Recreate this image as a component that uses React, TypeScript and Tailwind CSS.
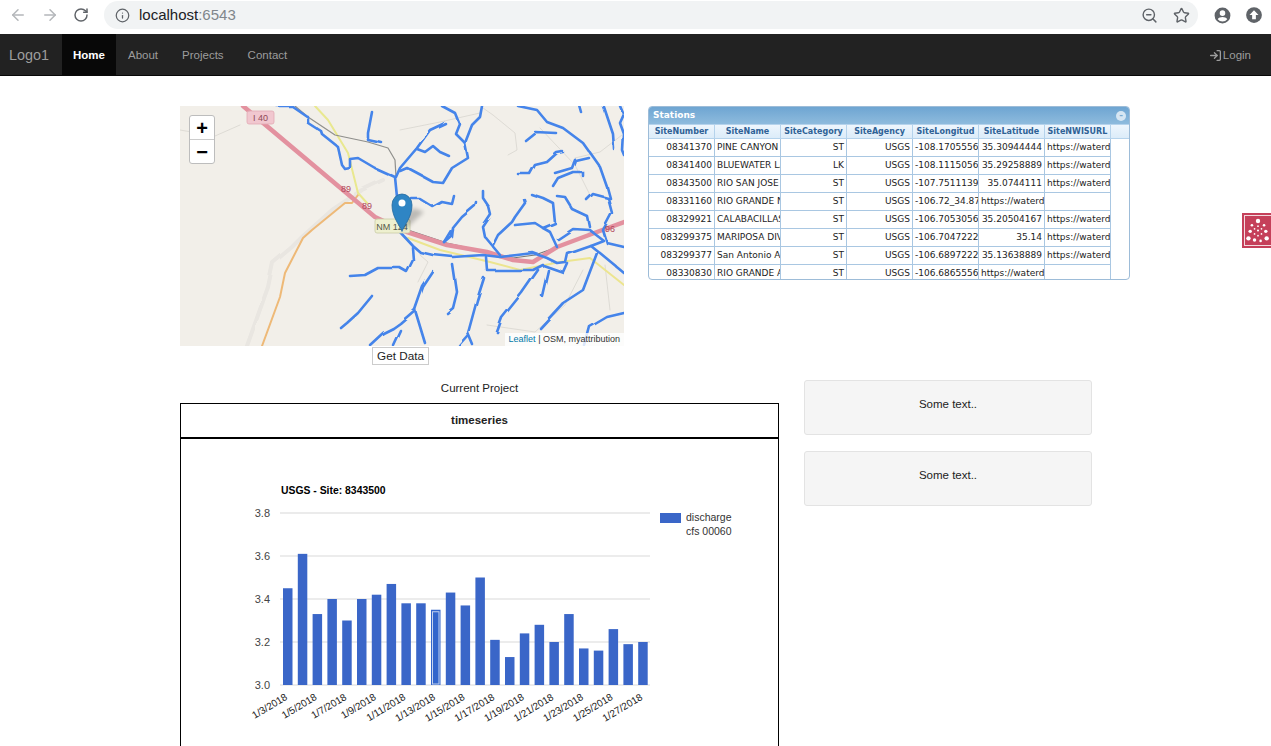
import { ArrowLeft, ArrowRight, Info, LogIn, RotateCw, Star, ZoomOut } from "lucide-react";

const rivers = [
  "M277 106 L292 106 L308 117 L308 123 L322 132 L323 135 L338 147 L342 165 L345 169 L350 168 L350 159 L358 158 L375 168 L395 177 L397 197",
  "M372 112 L368 133 L368 140 L382 143",
  "M482 106 L480 117 L472 125 L465 143 L468 158 L452 168 L443 183 L433 182 L422 176 L407 168 L400 171",
  "M442 106 L455 113 L459 123 L455 133 L465 143",
  "M445 123 L430 130 L417 148 L400 168 L396 177",
  "M417 149 L425 152 L433 146 L440 152 L449 156",
  "M412 199 L420 199 L433 207 L442 202 L452 204 L454 196",
  "M476 202 L475 206 L462 217 L453 228 L452 237 L445 243",
  "M483 191 L483 198 L489 207 L491 215 L483 227 L485 237 L500 255",
  "M524 199 L525 203 L515 217 L512 222 L498 235 L493 245",
  "M515 225 L535 223 L543 228 L555 223 L553 203 L543 198 L531 194",
  "M543 228 L550 232 L557 247",
  "M557 196 L565 197 L573 210 L588 217 L590 227",
  "M587 200 L593 194 L608 198 L612 213 L603 230 L607 243 L624 247",
  "M518 106 L537 110 L547 122 L563 128 L583 143 L600 167 L607 187 L610 198",
  "M525 140 L535 132 L556 133",
  "M518 174 L530 174 L535 165 L547 162 L557 153 L563 152",
  "M555 173 L572 168 L575 160 L588 157",
  "M553 186 L558 178 L573 172 L583 172 L583 176",
  "M580 106 L582 113",
  "M603 106 L612 133 L613 148",
  "M620 106 L623 113 L619 122 L623 133 L622 150 L624 155",
  "M558 239 L573 229 L590 230 L603 240 L590 245 L567 253 L565 262 L557 263 L547 258 L533 253 L517 255 L500 257 L483 255 L453 257 L433 255 L420 252 L412 245 L400 232",
  "M590 245 L600 253 L623 272",
  "M412 247 L413 260 L407 272 L400 268 L378 268 L365 275 L350 276",
  "M486 257 L487 270 L533 270 L543 265 L563 272 L567 263",
  "M433 272 L423 287 L415 310 L400 323 L393 328 L383 333 L370 345",
  "M415 310 L425 343",
  "M400 330 L393 345",
  "M453 265 L457 292 L453 308 L447 313",
  "M484 278 L477 300 L468 333 L473 345",
  "M468 337 L460 346",
  "M538 270 L522 293 L502 318 L497 332",
  "M548 270 L542 296",
  "M597 253 L583 290 L563 303 L540 328",
  "M624 313 L607 317 L590 327 L585 346",
  "M372 296 L358 313 L347 323 L341 328",
  "M453 230 L445 243",
];

const thinRoads = [
  "M483 108 L493 115 L515 133 L517 150 L508 155",
  "M180 130 L215 136 L240 125",
  "M400 130 L440 122 L480 113",
  "M540 128 L575 165 L590 195",
  "M622 135 L600 152 L575 158",
  "M420 255 L428 262 L418 282",
  "M487 325 L535 332 L565 305 L583 270",
  "M605 265 L610 310",
];

const bars = [3.45, 3.61, 3.33, 3.4, 3.3, 3.4, 3.42, 3.47, 3.38, 3.38, 3.35, 3.43, 3.37, 3.5, 3.21, 3.13, 3.24, 3.28, 3.2, 3.33, 3.17, 3.16, 3.26, 3.19, 3.2];
const dateLabels = ["1/3/2018", "1/5/2018", "1/7/2018", "1/9/2018", "1/11/2018", "1/13/2018", "1/15/2018", "1/17/2018", "1/19/2018", "1/21/2018", "1/23/2018", "1/25/2018", "1/27/2018"];

const columns = ["SiteNumber", "SiteName", "SiteCategory", "SiteAgency", "SiteLongitud", "SiteLatitude", "SiteNWISURL"];
const url = "https://waterdata.usgs.gov";
const stations = [
  ["08341370", "PINE CANYON", "ST", "USGS", "-108.1705556", "35.30944444", url],
  ["08341400", "BLUEWATER LAKE", "LK", "USGS", "-108.1115056", "35.29258889", url],
  ["08343500", "RIO SAN JOSE AT", "ST", "USGS", "-107.7511139", "35.0744111", url],
  ["08331160", "RIO GRANDE NR", "ST", "USGS", "-106.72_34.87", url, ""],
  ["08329921", "CALABACILLAS AR", "ST", "USGS", "-106.7053056", "35.20504167", url],
  ["083299375", "MARIPOSA DIV", "ST", "USGS", "-106.7047222", "35.14", url],
  ["083299377", "San Antonio Ar", "ST", "USGS", "-106.6897222", "35.13638889", url],
  ["08330830", "RIO GRANDE AT", "ST", "USGS", "-106.6865556", url, ""],
];

function BrowserBar() {
  return (
    <div className="flex h-[34px] items-center bg-white pb-[4px] text-[#5f6368]">
      <div className="flex w-[104px] items-center">
        <ArrowLeft className="ml-[9px] h-[18px] w-[18px] text-[#b4b7ba]" strokeWidth={2} />
        <ArrowRight className="ml-[14px] h-[18px] w-[18px] text-[#b4b7ba]" strokeWidth={2} />
        <RotateCw className="ml-[14px] h-[16px] w-[16px] text-[#5f6368]" strokeWidth={2.2} />
      </div>
      <div className="flex h-[28px] w-[1094px] items-center rounded-full bg-[#f1f3f4] pl-[11px] pr-[8px]">
        <Info className="h-[15px] w-[15px] text-[#5f6368]" strokeWidth={2} />
        <span className="ml-[9px] text-[15px] text-[#202124]">
          localhost<span className="text-[#80868b]">:6543</span>
        </span>
        <ZoomOut className="ml-auto h-[17px] w-[17px]" strokeWidth={2} />
        <Star className="ml-[15px] h-[17px] w-[17px]" strokeWidth={2} />
      </div>
      <svg viewBox="0 0 24 24" className="ml-[15px] h-[19px] w-[19px] fill-[#5f6368]">
        <path d="M12 2a10 10 0 100 20 10 10 0 000-20zm0 3.5a3.5 3.5 0 110 7 3.5 3.5 0 010-7zm0 14.2a7.7 7.7 0 01-6-2.9c.6-1.9 4-2.9 6-2.9s5.400 1 6 2.900a7.700 7.700 0 01-6 2.900z" />
      </svg>
      <svg viewBox="0 0 24 24" className="ml-[13px] h-[18px] w-[18px]">
        <circle cx="12" cy="12" r="10.500" fill="#5f6368" />
        <path d="M12 5.500l6 6.500h-3.500v5.500h-5V12H6z" fill="#fff" />
      </svg>
    </div>
  );
}

function NavBar() {
  return (
    <nav className="flex h-[42px] items-stretch border-b border-[#080808] bg-[#222222] text-[11.5px] text-[#9d9d9d]">
      <a className="flex w-[62px] items-center pl-[9px] pt-[2px] text-[14.400px]">Logo1</a>
      <a className="flex w-[54px] items-center justify-center bg-[#080808] pt-[2px] font-bold text-white">Home</a>
      <a className="ml-[12px] flex items-center pt-[2px]">About</a>
      <a className="ml-[24px] flex items-center pt-[2px]">Projects</a>
      <a className="ml-[24px] flex items-center pt-[2px]">Contact</a>
      <a className="ml-auto mr-[20px] flex items-center gap-px pt-[2px]">
        <LogIn className="h-[13px] w-[13px]" strokeWidth={2.400} />
        Login
      </a>
    </nav>
  );
}

function LeafletMap() {
  return (
    <div className="relative h-[240px] w-[444px] overflow-hidden bg-[#f2efe9]">
      <svg viewBox="180 106 444 240" className="block h-[240px] w-[444px]" fill="none" strokeLinecap="round" strokeLinejoin="round">
        <defs>
          <filter id="wobble" filterUnits="userSpaceOnUse" x="170" y="96" width="464" height="260">
            <feTurbulence type="fractalNoise" baseFrequency="0.035" numOctaves="1" seed="4" />
            <feDisplacementMap in="SourceGraphic" scale="5" />
          </filter>
          <filter id="soft" x="-30%" y="-30%" width="160%" height="160%">
            <feGaussianBlur stdDeviation="2" />
          </filter>
        </defs>
        <path d="M383 180 L362 190 L332 210 L302 237 L292 247 L273 263 L268 287 L247 346" stroke="#e9e6e1" strokeWidth="4" filter="url(#wobble)" />
        {thinRoads.map((d, i) => (
          <path key={i} d={d} stroke="#d8d5cf" strokeWidth="0.800" />
        ))}
        <path d="M358 195 L352 203 L345 203 L312 230 L303 238 L285 273 L280 297 L262 346" stroke="#eeb977" strokeWidth="2" />
        <path d="M315 106 L328 120 L348 153 L358 193 L367 203" stroke="#e9e88f" strokeWidth="2" />
        <path d="M408 238 L440 250 L490 262 L520 270 L560 262 L590 258 L624 285" stroke="#ece58f" strokeWidth="2" />
        <path d="M295 106 L308 117 L335 135 L368 142 L388 148 L395 160 L396 177" stroke="#8f8f8c" strokeWidth="1.200" />
        <path d="M408 230 L447 243 L487 252 L513 258 L535 255 L600 232" stroke="#777" strokeWidth="1.200" />
        <path d="M243 106 L375 217 L407 232 L447 245 L487 252 L513 260 L533 262 L557 247 L597 232 L624 222" stroke="#e3919f" strokeWidth="4.500" />
        <g filter="url(#wobble)">
          {rivers.map((d, i) => (
            <path key={i} d={d} stroke="#4484ea" strokeWidth="2.600" />
          ))}
        </g>
        <rect x="247" y="111" width="27" height="13" rx="2" fill="#f1c7cf" stroke="#e2a9b4" strokeWidth="0.800" />
        <text x="260.500" y="121" textAnchor="middle" fontSize="9" fill="#8d4a58" fontFamily="'Liberation Sans', sans-serif">I 40</text>
        <text x="346" y="192" textAnchor="middle" fontSize="9" fill="#b0485c" fontFamily="'Liberation Sans', sans-serif">89</text>
        <text x="367" y="209" textAnchor="middle" fontSize="9" fill="#b0485c" fontFamily="'Liberation Sans', sans-serif">89</text>
        <text x="610" y="232" textAnchor="middle" fontSize="9" fill="#b0485c" fontFamily="'Liberation Sans', sans-serif">96</text>
        <rect x="375" y="219" width="35" height="14" rx="2" fill="#eef0cf" stroke="#c9cba4" strokeWidth="0.800" />
        <text x="392" y="229.500" textAnchor="middle" fontSize="9" fill="#55584a" fontFamily="'Liberation Sans', sans-serif">NM 124</text>
        <path d="M402 232 L424 212 L414 208 L406 214 Z" fill="#000" opacity="0.220" filter="url(#soft)" />
        <path d="M402 231 C398 223 392 216 392 205 A10 11 0 0 1 412 205 C412 216 406 223 402 231 Z" fill="#2f85c4" stroke="#25699e" strokeWidth="0.800" />
        <circle cx="402" cy="203" r="3.500" fill="#fff" />
      </svg>

      <div className="absolute left-[9px] top-[9px] w-[26px] overflow-hidden rounded-[3px] border border-[#bdbdbd] bg-white text-black">
        <div className="flex h-[24px] items-center justify-center border-b border-[#cccccc] text-[20px] font-bold leading-none">+</div>
        <div className="flex h-[23px] items-center justify-center text-[20px] font-bold leading-none">−</div>
      </div>
      <div className="absolute bottom-0 right-0 bg-white/80 px-[4px] text-[9px] leading-[13px] text-[#333333]">
        <span className="text-[#0078a8]">Leaflet</span> | OSM, myattribution
      </div>
    </div>
  );
}

function StationsGrid() {
  return (
    <div className="h-[174px] w-[482px] overflow-hidden rounded-[4px] border border-[#9dbcd8] bg-white font-['DejaVu_Sans',sans-serif]">
      <div className="flex h-[17px] items-center justify-between bg-gradient-to-b from-[#6ea5d2] to-[#8ebbdd] pl-[4px] pr-[3px] text-[9px] font-bold text-white">
        <span>Stations</span>
        <span className="flex h-[10px] w-[10px] items-center justify-center rounded-full bg-[#d6e6f3] text-[9px] leading-none text-[#7dabd0]">-</span>
      </div>
      <div className="flex h-[15px] border-y border-[#b5d3ec] bg-gradient-to-b from-[#eef6fd] to-[#dcecf9] text-[8px] font-bold text-[#2f6296]">
        {columns.map((c) => (
          <div key={c} className="flex w-[66px] shrink-0 items-center justify-center overflow-hidden whitespace-nowrap border-r border-[#b5d3ec]">
            {c}
          </div>
        ))}
      </div>
      <div className="text-[9px] text-[#1c1c1c]">
        {stations.map((row) => (
          <div key={row[0]} className="flex h-[18px]">
            {row.map((cell, i) => (
              <div
                key={i}
                className={`w-[66px] shrink-0 overflow-hidden whitespace-nowrap border-b border-r border-[#a9c7e2] px-[2px] leading-[17px] ${i === 1 || cell === url ? "text-left" : "text-right"} ${i === 4 ? "pr-0 text-left" : ""}`}
              >
                {cell}
              </div>
            ))}
          </div>
        ))}
      </div>
    </div>
  );
}

function TimeseriesChart() {
  const font = "'Liberation Sans', sans-serif";
  return (
    <svg viewBox="181 439 597 307" className="block h-[307px] w-[597px]" fontFamily={font}>
      <text x="281" y="494" fontSize="10.400" fontWeight="bold" fill="#000">USGS - Site: 8343500</text>
      {[3.8, 3.6, 3.4, 3.2, 3.0].map((v) => {
        const y = 685 - (v - 3) * 215;
        return (
          <g key={v}>
            <line x1="280" x2="650" y1={y} y2={y} stroke={v === 3.8 ? "#ebebeb" : "#d9d9d9"} strokeWidth={v === 3.8 ? 2 : 1} />
            <text x="270" y={y + 4} textAnchor="end" fontSize="11" fill="#444">{v.toFixed(1)}</text>
          </g>
        );
      })}
      {bars.map((v, i) => {
        const x = 283 + i * 14.800;
        const top = 685 - (v - 3) * 215;
        return i === 10 ? (
          <g key={i}>
            <rect x={x} y={top} width="9.500" height={685 - top} fill="#3366cc" />
            <rect x={x + 1.500} y={top + 2} width="6.500" height={685 - top - 3} fill="#3366cc" stroke="#c5d3ee" strokeWidth="1" />
          </g>
        ) : (
          <rect key={i} x={x} y={top} width="9.500" height={685 - top} fill="#3a66c8" />
        );
      })}
      {dateLabels.map((d, i) => {
        const x = 288 + i * 29.600;
        return (
          <text key={d} x={x} y="699" textAnchor="end" fontSize="10" fill="#222" transform={`rotate(-31 ${x} 699)`}>
            {d}
          </text>
        );
      })}
      <rect x="660" y="513" width="21" height="10" fill="#3a66c8" />
      <text x="686" y="521" fontSize="10.500" fill="#333">discharge</text>
      <text x="686" y="535" fontSize="10.500" fill="#333">cfs 00060</text>
    </svg>
  );
}

function SideWidget() {
  const dots = [
    [15, 4, 2.500], [8, 9, 1.500], [22, 9, 1.500], [6, 16, 2], [24, 16, 2], [4, 24, 2.500], [11, 26, 2],
    [18, 27, 1.500], [25, 24, 2.500], [15, 10, 1], [11, 13, 1], [19, 13, 1], [11, 19, 1], [19, 19, 1], [15, 21, 1], [15, 15, 1.200],
  ];
  return (
    <div className="absolute right-0 top-[213px] h-[35px] w-[29px] bg-[#c5405a] p-[2px] pr-0">
      <div className="h-full w-full border border-r-0 border-white/80">
        <svg viewBox="0 0 30 30" className="h-full w-full fill-white">
          {dots.map(([cx, cy, r], i) => (
            <circle key={i} cx={cx} cy={cy} r={r} />
          ))}
        </svg>
      </div>
    </div>
  );
}

export default function App() {
  return (
    <div className="relative h-[746px] overflow-hidden bg-white font-['Liberation_Sans',Arial,sans-serif] text-[11.5px] text-[#222222]">
      <BrowserBar />
      <NavBar />
      <SideWidget />

      <main className="pl-[180px] pt-[30px]">
        <div className="flex items-start gap-[24px]">
          <div className="w-[444px]">
            <LeafletMap />
            <div className="mt-px flex justify-center">
              <button className="ml-[-3px] h-[18px] w-[57px] border border-[#cccccc] bg-white pb-px text-[11.7px] leading-none text-[#222222]">Get Data</button>
            </div>
          </div>
          <StationsGrid />
        </div>

        <div className="mt-[15px] flex items-start gap-[25px]">
          <div className="w-[599px]">
            <div className="mb-[7px] h-[16px] text-center leading-[16px]">Current Project</div>
            <div className="h-[400px] border border-black">
              <div className="flex h-[35px] items-center justify-center border-b-2 border-black font-bold">timeseries</div>
              <TimeseriesChart />
            </div>
          </div>
          <div className="flex w-[288px] flex-col gap-[16px]">
            <div className="flex h-[55px] items-center justify-center rounded-[3px] border border-[#e3e3e3] bg-[#f5f5f5] pb-[6px]">Some text..</div>
            <div className="flex h-[55px] items-center justify-center rounded-[3px] border border-[#e3e3e3] bg-[#f5f5f5] pb-[6px]">Some text..</div>
          </div>
        </div>
      </main>
    </div>
  );
}
